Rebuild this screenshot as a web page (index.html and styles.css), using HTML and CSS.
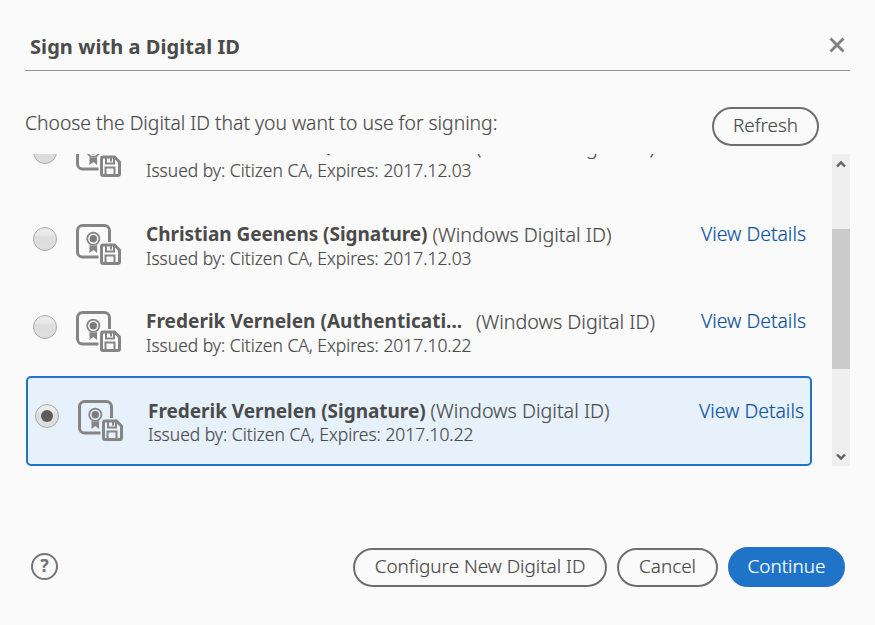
FILE: index.html
```html
<!DOCTYPE html>
<html lang="en">
<head>
<meta charset="utf-8">
<title>Sign with a Digital ID</title>
<link rel="stylesheet" href="styles.css">
</head>
<body>
<svg width="0" height="0" class="defs" aria-hidden="true">
  <symbol id="cert" viewBox="0 0 45 41">
    <g fill="none" stroke="#858585">
      <path d="M22.500 33H6.500a5 5 0 0 1-5-5V6.500a5 5 0 0 1 5-5h22a5 5 0 0 1 5 5V18" stroke-width="3"/>
      <circle cx="17.300" cy="14.800" r="6.100" stroke-width="1.800"/>
      <circle cx="17.300" cy="14.800" r="3.700" fill="#7c7c7c" stroke="none"/>
      <path d="M13.500 21v8l3.800-3 3.800 3v-8c-2 1-5.500 1-7.600 0z" fill="#858585" stroke="none"/>
      <path d="M25.500 22.500a1.500 1.500 0 0 1 1.500-1.500h11.500l5 5v12a1.500 1.500 0 0 1-1.500 1.500H27a1.500 1.500 0 0 1-1.500-1.500z" stroke-width="3"/>
      <path d="M30 21.500v6h8v-6M29.500 39v-7.500h9V39" stroke-width="2"/>
      <path d="M35 22v3.500" stroke-width="2"/>
    </g>
  </symbol>
</svg>
<main class="dialog">
  <header class="head">
    <h1>Sign with a Digital ID</h1>
    <svg class="close" viewBox="0 0 16 16"><path d="M1.500 1.500l13 13M14.500 1.500l-13 13"/></svg>
  </header>
  <div class="intro">
    <p>Choose the Digital ID that you want to use for signing:</p>
    <button class="btn refresh">Refresh</button>
  </div>
  <div class="pane">
    <div class="list">
      <div class="row first">
        <span class="radio"></span><svg class="icon"><use href="#cert"/></svg>
        <div class="info"><div class="line"><b class="long">Christian Geenens (Authentica...</b><span class="kind">(Windows Digital ID)</span></div><div class="issued">Issued by: Citizen CA, Expires: 2017.12.03</div></div>
      </div>
      <div class="row second">
        <span class="radio"></span><svg class="icon"><use href="#cert"/></svg>
        <div class="info"><div class="line"><b>Christian Geenens (Signature)</b><span class="kind">(Windows Digital ID)</span></div><div class="issued">Issued by: Citizen CA, Expires: 2017.12.03</div></div>
        <a class="details">View Details</a>
      </div>
      <div class="row third">
        <span class="radio"></span><svg class="icon"><use href="#cert"/></svg>
        <div class="info"><div class="line"><b class="long">Frederik Vernelen (Authenticati...</b><span class="kind">(Windows Digital ID)</span></div><div class="issued">Issued by: Citizen CA, Expires: 2017.10.22</div></div>
        <a class="details">View Details</a>
      </div>
      <div class="row selected">
        <span class="radio on"></span><svg class="icon"><use href="#cert"/></svg>
        <div class="info"><div class="line"><b>Frederik Vernelen (Signature)</b><span class="kind">(Windows Digital ID)</span></div><div class="issued">Issued by: Citizen CA, Expires: 2017.10.22</div></div>
        <a class="details">View Details</a>
      </div>
    </div>
    <div class="scrollbar">
      <svg viewBox="0 0 10 8"><path d="M1 6.500L5 2.500l4 4"/></svg>
      <div class="thumb"></div>
      <svg viewBox="0 0 10 8"><path d="M1 1.500l4 4 4-4"/></svg>
    </div>
  </div>
  <footer class="foot">
    <div class="help">?</div>
    <button class="btn configure">Configure New Digital ID</button>
    <button class="btn cancel">Cancel</button>
    <button class="btn primary">Continue</button>
  </footer>
</main>
</body>
</html>
```
FILE: styles.css
```css
* { box-sizing: border-box; }
body {
  margin: 0;
  background: #fafafa;
  color: #4b4b4b;
  font-family: "Noto Sans", "Open Sans", sans-serif;
  font-weight: 300;
  -webkit-text-stroke: .2px currentColor;
}
.defs { display: block; }
.dialog {
  width: 875px;
  height: 625px;
  padding: 20px 25px 0;
  overflow: hidden;
}
.head {
  display: flex;
  justify-content: space-between;
  height: 51px;
  padding: 13px 5px 0;
  border-bottom: 1px solid #959595;
}
h1, b { -webkit-text-stroke: 0; }
h1 {
  margin: 0;
  font-size: 20px;
  line-height: 28px;
  font-weight: 700;
  letter-spacing: .07px;
}
.close { width: 16px; height: 16px; margin-top: 4px; }
.close path { fill: none; stroke: #808080; stroke-width: 2.8; }
.intro {
  display: flex;
  justify-content: space-between;
  height: 83px;
  padding: 36px 31px 0 0;
}
.intro p {
  margin: 2px 0 0;
  font-size: 19.3px;
  line-height: 28px;
  white-space: nowrap;
}
.btn {
  display: block;
  height: 39px;
  padding: 0 0 2px;
  border: 2px solid #6e6e6e;
  border-radius: 20px;
  background: transparent;
  color: inherit;
  font: inherit;
  font-size: 18.9px;
  line-height: 33px;
  white-space: nowrap;
}
.refresh { width: 107px; }
.pane {
  display: flex;
  justify-content: space-between;
  height: 312px;
  overflow: hidden;
}
.list {
  display: flex;
  flex-direction: column;
  justify-content: flex-end;
  width: 787px;
  padding-left: 1px;
  overflow: hidden;
}
.row {
  display: flex;
  flex: none;
  height: 88px;
  padding: 21px 6px 0 7px;
}
.second { height: 87px; }
.selected {
  height: 90px;
  border: 2px solid #1f74c8;
  border-radius: 5px;
  background: #e6f1fb;
}
.radio {
  display: flex;
  align-items: center;
  justify-content: center;
  width: 24px;
  height: 24px;
  margin: 5px 19px 0 0;
  border: 1px solid #a9a9a9;
  border-radius: 50%;
  background: linear-gradient(#eaeaea 25%, #dcdcdc 45%, #dedede);
}
.third .radio, .first .radio { margin-top: 6px; }
.on::before {
  content: "";
  width: 12px;
  height: 12px;
  border-radius: 50%;
  background: #5c5c5c;
}
.icon { width: 45px; height: 41px; margin: 2px 25px 0 0; }
.selected .icon { margin-top: 1px; }
.info { flex: 1; }
.line { display: flex; height: 24px; line-height: 24px; white-space: nowrap; }
.line b { margin-right: 5px; font-size: 19px; font-weight: 700; letter-spacing: -.04px; }
.line .long { width: 325px; letter-spacing: .03px; }
.first b { margin-top: -1px; }
.kind { position: relative; top: 1px; font-size: 19.7px; }
.selected .kind { top: 0; }
.issued { font-size: 17.45px; line-height: 24px; }
.selected .issued { line-height: 23px; }
.details { color: #0b54a0; font-size: 19.4px; line-height: 24px; }
.scrollbar {
  display: flex;
  flex-direction: column;
  justify-content: space-between;
  align-items: center;
  width: 18px;
  padding: 6px 0 5px;
  background: #efefef;
}
.scrollbar svg { width: 10px; height: 8px; }
.scrollbar path { fill: none; stroke: #606060; stroke-width: 2.4; }
.thumb { width: 18px; height: 140px; margin-bottom: 10px; margin-top: -14px; background: #cbcbcb; }
.foot {
  display: flex;
  align-items: flex-end;
  gap: 10px;
  height: 121px;
  padding: 0 5px 0 6px;
}
.help {
  width: 27px;
  height: 27px;
  margin: 0 auto 7px 0;
  border: 2.5px solid #757575;
  border-radius: 50%;
  color: #757575;
  font-size: 17px;
  font-weight: 700;
  line-height: 22px;
  text-align: center;
}
.configure { width: 254px; }
.cancel { width: 101px; }
.primary {
  width: 117px;
  height: 40px;
  border-color: #1f74c8;
  background: #1f74c8;
  color: #fff;
}
```
